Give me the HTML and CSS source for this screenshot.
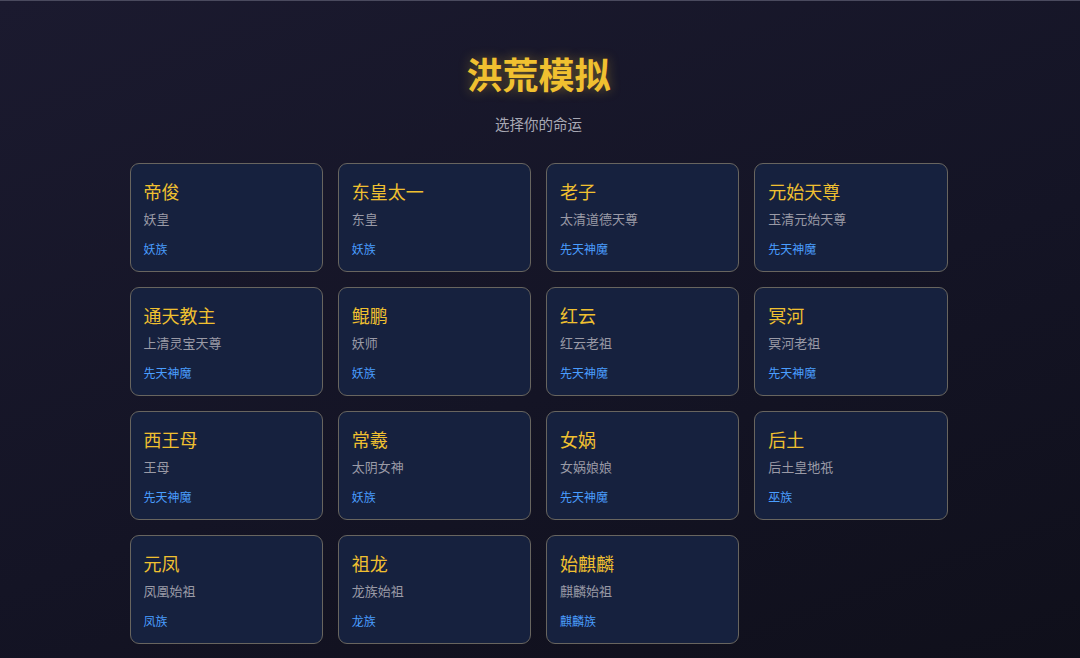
FILE: index.html
```html
<!DOCTYPE html>
<html lang="zh-CN">
<head>
  <meta charset="UTF-8">
  <meta name="viewport" content="width=device-width, initial-scale=1.0">
  <title>洪荒模拟</title>
  <link rel="stylesheet" href="styles.css">
</head>
<body>
  <main class="app">
    <header class="intro">
      <h1 class="game-title">洪荒模拟</h1>
      <p class="game-subtitle">选择你的命运</p>
    </header>

    <div class="character-grid">
      <div class="character-card">
        <h3 class="character-name">帝俊</h3>
        <p class="character-title">妖皇</p>
        <span class="character-race">妖族</span>
      </div>
      <div class="character-card">
        <h3 class="character-name">东皇太一</h3>
        <p class="character-title">东皇</p>
        <span class="character-race">妖族</span>
      </div>
      <div class="character-card">
        <h3 class="character-name">老子</h3>
        <p class="character-title">太清道德天尊</p>
        <span class="character-race">先天神魔</span>
      </div>
      <div class="character-card">
        <h3 class="character-name">元始天尊</h3>
        <p class="character-title">玉清元始天尊</p>
        <span class="character-race">先天神魔</span>
      </div>
      <div class="character-card">
        <h3 class="character-name">通天教主</h3>
        <p class="character-title">上清灵宝天尊</p>
        <span class="character-race">先天神魔</span>
      </div>
      <div class="character-card">
        <h3 class="character-name">鲲鹏</h3>
        <p class="character-title">妖师</p>
        <span class="character-race">妖族</span>
      </div>
      <div class="character-card">
        <h3 class="character-name">红云</h3>
        <p class="character-title">红云老祖</p>
        <span class="character-race">先天神魔</span>
      </div>
      <div class="character-card">
        <h3 class="character-name">冥河</h3>
        <p class="character-title">冥河老祖</p>
        <span class="character-race">先天神魔</span>
      </div>
      <div class="character-card">
        <h3 class="character-name">西王母</h3>
        <p class="character-title">王母</p>
        <span class="character-race">先天神魔</span>
      </div>
      <div class="character-card">
        <h3 class="character-name">常羲</h3>
        <p class="character-title">太阴女神</p>
        <span class="character-race">妖族</span>
      </div>
      <div class="character-card">
        <h3 class="character-name">女娲</h3>
        <p class="character-title">女娲娘娘</p>
        <span class="character-race">先天神魔</span>
      </div>
      <div class="character-card">
        <h3 class="character-name">后土</h3>
        <p class="character-title">后土皇地祇</p>
        <span class="character-race">巫族</span>
      </div>
      <div class="character-card">
        <h3 class="character-name">元凤</h3>
        <p class="character-title">凤凰始祖</p>
        <span class="character-race">凤族</span>
      </div>
      <div class="character-card">
        <h3 class="character-name">祖龙</h3>
        <p class="character-title">龙族始祖</p>
        <span class="character-race">龙族</span>
      </div>
      <div class="character-card">
        <h3 class="character-name">始麒麟</h3>
        <p class="character-title">麒麟始祖</p>
        <span class="character-race">麒麟族</span>
      </div>
    </div>
  </main>
</body>
</html>
```

FILE: styles.css
```css
body {
  font-family: "Noto Sans CJK SC", "Noto Sans", sans-serif;
  margin: 0;
  padding: 0;
  min-height: 100vh;
  border-top: 1px solid #4a4a5e;
  background: linear-gradient(160deg, #1b1a2f 0%, #141425 55%, #0f0f1a 100%);
  color: #ddd;
}

.app {
  max-width: 818px;
  margin: 0 auto;
  padding: 42px 3px 40px 0;
}

.intro {
  text-align: center;
}

.game-title {
  margin: 0;
  font-size: 36px;
  font-weight: 700;
  line-height: 60px;
  color: #f0c030;
  text-shadow: 0 0 12px rgba(240, 192, 48, 0.4);
}

.game-subtitle {
  margin: 11px 0 0;
  font-size: 14.5px;
  line-height: 20px;
  color: #a8a8b4;
}

.character-grid {
  display: grid;
  grid-template-columns: repeat(4, 1fr);
  gap: 15px;
  margin-top: 29px;
}

.character-card {
  background-color: #16213e;
  border: 1px solid #68655f;
  border-radius: 9px;
  padding: 13px 13px 10px;
  height: 109px;
  box-sizing: border-box;
  cursor: pointer;
  transition: transform 0.2s ease-in-out;
}

.character-card:hover {
  transform: translateY(-2px);
}

.character-name {
  margin: 0;
  font-size: 18px;
  font-weight: 400;
  line-height: 28px;
  color: #f0c030;
}

.character-title {
  margin: 2px 0 0;
  font-size: 13px;
  line-height: 24px;
  color: #9a9aa6;
}

.character-race {
  display: block;
  margin-top: 9px;
  font-size: 12px;
  line-height: 18px;
  color: #4a9eff;
}
```
